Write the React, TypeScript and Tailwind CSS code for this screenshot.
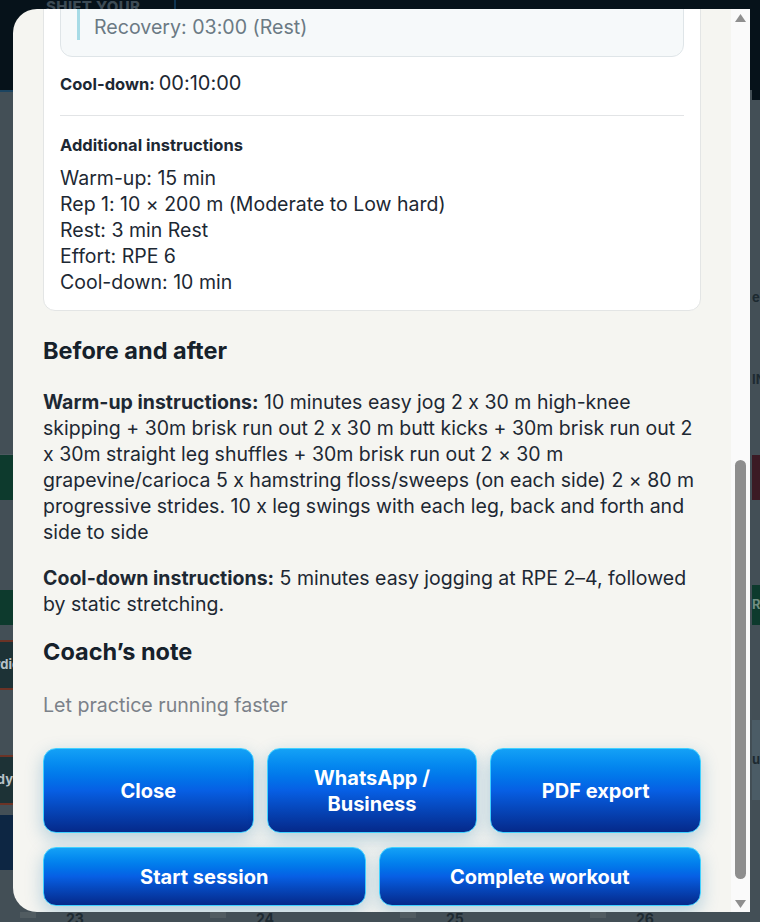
import { useLayoutEffect, useRef, useState, type ReactNode } from 'react';

const additional = [
  'Warm-up: 15 min',
  'Rep 1: 10 × 200 m (Moderate to Low hard)',
  'Rest: 3 min Rest',
  'Effort: RPE 6',
  'Cool-down: 10 min',
];

const goals = [
  'Run every rep within two seconds of the target time',
  'Stay relaxed through the shoulders and arms',
  'Keep a quick, light cadence on the bends',
  'Walk or stand still for the full recovery',
];

function ActionButton({ children, className = '' }: { children: ReactNode; className?: string }) {
  return (
    <button
      className={`flex items-center justify-center rounded-[13px] border border-[#3fd0ff] bg-linear-to-b from-[#14a1f6] via-[#075fe4] to-[#05298a] px-5 text-center text-[20px] font-bold leading-[26px] text-white shadow-[0_6px_18px_rgba(3,105,161,0.28)] ${className}`}
    >
      {children}
    </button>
  );
}

function StatTile({ label, value }: { label: string; value: string }) {
  return (
    <div className="rounded-xl border border-[#e3e5e5] bg-white px-4 py-3">
      <p className="text-[13px] font-semibold uppercase tracking-wide text-[#6b7a84]">{label}</p>
      <p className="mt-1 text-[20px] font-bold text-[#1b2631]">{value}</p>
    </div>
  );
}

function Arrow({ down = false }: { down?: boolean }) {
  return (
    <div className="flex h-[17px] items-center justify-center">
      <svg width="11" height="8" viewBox="0 0 11 8">
        <polygon points={down ? '0,0 11,0 5.5,8' : '0,8 11,8 5.5,0'} fill="#8f8f8f" />
      </svg>
    </div>
  );
}

// dimmed calendar behind the dialog
function Backdrop() {
  return (
    <div className="flex h-full flex-col">
      <div className="flex h-[90px] items-start bg-[#06121a] pl-[46px]">
        <span className="-mt-[4px] text-[15px] font-extrabold uppercase tracking-wide text-[#3d4b55]">Shift your</span>
        <span className="ml-[34px] h-[9px] w-[2px] bg-[#0f3552]" />
      </div>
      <div className="flex flex-1 justify-between">
        <div className="flex w-[60px] flex-col text-[13px] font-bold text-[#b7c2c8]">
          <div className="h-[2px] bg-[#1b4460]" />
          <div className="h-[363px] border-b border-[#4c585f]" />
          <div className="h-[45px] bg-[#0d3a2d]" />
          <div className="h-[90px]" />
          <div className="h-[35px] bg-[#0d3a2d]" />
          <div className="h-[15px]" />
          <div className="flex h-[50px] items-center justify-end whitespace-nowrap border-y-2 border-[#6b3326] bg-[#1d3236] pr-[40px]">Cardio</div>
          <div className="h-[65px]" />
          <div className="flex h-[50px] items-center justify-end whitespace-nowrap border-y-2 border-[#6b3326] bg-[#1d3236] pr-[47px]">Body</div>
          <div className="h-[10px]" />
          <div className="h-[55px] bg-[#0d2643]" />
          <div className="flex-1" />
        </div>
        <div className="flex w-[60px] flex-col pl-[52px] text-[13px] font-bold text-[#1d2a31]">
          <div className="h-[10px] bg-[#06121a]" />
          <div className="h-[188px]" />
          <div className="h-[20px] whitespace-nowrap">eed</div>
          <div className="h-[62px]" />
          <div className="h-[20px] whitespace-nowrap">IN</div>
          <div className="h-[65px]" />
          <div className="h-[45px] bg-[#3b1a24]" />
          <div className="h-[85px]" />
          <div className="flex h-[40px] items-center whitespace-nowrap bg-[#0d3a2d] text-[#6f8d82]">R</div>
          <div className="h-[95px]" />
          <div className="flex h-[80px] items-center whitespace-nowrap bg-[#4b5c66]">ur</div>
          <div className="flex-1" />
        </div>
      </div>
      <div className="grid h-[14px] grid-cols-4 text-[14px] font-bold leading-none text-[#1d2a31]">
        {['23', '24', '25', '26'].map((d) => (
          <div key={d} className="flex items-start gap-[30px] pl-[20px] pt-[4px]">
            <span className="h-[6px] w-[16px] bg-[#515c61]" />
            <span>{d}</span>
          </div>
        ))}
      </div>
    </div>
  );
}

export default function App() {
  const scrollRef = useRef<HTMLDivElement>(null);
  const trackRef = useRef<HTMLDivElement>(null);
  const [thumb, setThumb] = useState({ top: 0, height: 0 });

  const syncThumb = () => {
    const el = scrollRef.current;
    const track = trackRef.current;
    if (!el || !track) return;
    const h = track.clientHeight;
    setThumb({
      top: (el.scrollTop / el.scrollHeight) * h,
      height: (el.clientHeight / el.scrollHeight) * h,
    });
  };

  useLayoutEffect(() => {
    const el = scrollRef.current;
    if (!el) return;
    el.scrollTop = el.scrollHeight - el.clientHeight - 35;
    syncThumb();
  }, []);

  return (
    <div className="relative h-[922px] w-[760px] overflow-hidden bg-[#434f56] font-['Inter','Noto_Sans',sans-serif] [font-feature-settings:'calt'_0]">
      <Backdrop />

      <div className="absolute left-[13px] top-[9px] flex h-[903px] w-[737px] overflow-hidden rounded-l-[24px] bg-[#f5f5f1] text-[#1d2833]">
        <div
          ref={scrollRef}
          onScroll={syncThumb}
          className="min-w-0 flex-1 overflow-y-auto [scrollbar-width:none]"
        >
          <div className="px-[30px] pb-[41px] pt-[30px]">
            {/* header */}
            <p className="text-[13px] font-semibold uppercase tracking-wide text-[#0e7490]">Tuesday · Week 3</p>
            <h2 className="mt-2 text-[26px] font-bold leading-[34px] text-[#16212b]">Speed intervals — 10 × 200 m</h2>
            <p className="mt-1 text-[16px] text-[#6b7a84]">Track session · 55 min · RPE 6</p>
            <p className="mt-2 text-[16px] leading-[26px] text-[#6b7a84]">Surface: Track · Shoes: Racing flats</p>

            <div className="mt-6 grid grid-cols-3 gap-3">
              <StatTile label="Duration" value="00:55:00" />
              <StatTile label="Distance" value="4.2 km" />
              <StatTile label="Effort" value="RPE 6" />
            </div>

            <h3 className="mt-[26px] text-[23.5px] font-bold leading-[30px] text-[#16212b]">Description</h3>
            <p className="mt-3 text-[19.5px] leading-[26px]">
              Short repeats at a controlled, moderate pace. Focus on relaxed shoulders, quick turnover and a
              tall posture. Keep every rep at the same speed and take the full recovery between them. If the
              last reps slow down by more than two seconds, stop the set early and jog the cool-down instead.
            </p>

            <h3 className="mt-[26px] text-[23.5px] font-bold leading-[30px] text-[#16212b]">Session goals</h3>
            <ul className="mt-3 text-[19.5px] leading-[26px]">
              {goals.map((g) => (
                <li key={g}>• {g}</li>
              ))}
            </ul>

            <h3 className="mt-[26px] text-[23.5px] font-bold leading-[30px] text-[#16212b]">Workout structure</h3>

            <div className="mt-[20px] rounded-xl border border-[#e3e5e5] bg-white px-4 pb-[15px] pt-4">
              <p className="text-[16.5px] font-bold leading-[28px]">
                Warm-up: <span className="text-[20px] font-normal">00:15:00</span>
              </p>
              <p className="mt-3 text-[16.5px] font-bold leading-[22px]">Main set</p>
              <div className="mt-3 rounded-xl border border-[#dfe5e8] bg-[#f6f9fa] p-4">
                <div className="border-l-[3px] border-[#a7dbe6] pl-[14px] text-[19.6px] leading-[26px] text-[#6b7a84]">
                  <p className="font-semibold text-[#1d2833]">Rep 1: 10 × 200 m</p>
                  <p>Distance: 200 m</p>
                  <p>Target: 00:40 per rep</p>
                  <p>Pace: Moderate to Low hard</p>
                  <p>Effort: RPE 6</p>
                  <p>Recovery: 03:00 (Rest)</p>
                </div>
              </div>

              <p className="mt-[11px] text-[16.5px] font-bold leading-[30px]">
                Cool-down: <span className="text-[20px] font-normal">00:10:00</span>
              </p>

              <div className="mt-[16px] border-t border-[#e2e4e6] pt-[18px]">
                <p className="text-[16.5px] font-bold leading-[22px]">Additional instructions</p>
                <div className="mt-[9px] text-[19.5px] leading-[26px]">
                  {additional.map((line) => (
                    <p key={line}>{line}</p>
                  ))}
                </div>
              </div>
            </div>

            {/* before / after */}
            <h3 className="mt-[25px] text-[23.5px] font-bold leading-[30px] text-[#16212b]">Before and after</h3>
            <p className="mt-[23px] text-[19.5px] leading-[26px]">
              <span className="font-bold">Warm-up instructions:</span> 10 minutes easy jog 2 x 30 m high-knee
              skipping + 30m brisk run out 2 x 30 m butt kicks + 30m brisk run out 2 x 30m straight leg shuffles
              + 30m brisk run out 2 × 30 m grapevine/carioca 5 x hamstring floss/sweeps (on each side) 2 × 80 m
              progressive strides. 10 x leg swings with each leg, back and forth and side to side
            </p>
            <p className="mt-[20px] text-[19.5px] leading-[26px]">
              <span className="font-bold">Cool-down instructions:</span> 5 minutes easy jogging at RPE 2–4,
              followed by static stretching.
            </p>

            <h3 className="mt-[20px] text-[23.5px] font-bold leading-[30px] text-[#16212b]">Coach’s note</h3>
            <p className="mt-[25px] text-[19.6px] leading-[26px] text-[#7b8189]">Let practice running faster</p>

            {/* actions */}
            <div className="mt-[30px] grid grid-cols-3 gap-[13px]">
              <ActionButton className="h-[85px]">Close</ActionButton>
              <ActionButton className="h-[85px]">WhatsApp / Business</ActionButton>
              <ActionButton className="h-[85px]">PDF export</ActionButton>
            </div>
            <div className="mt-[14px] grid grid-cols-2 gap-[13px]">
              <ActionButton className="h-[59px]">Start session</ActionButton>
              <ActionButton className="h-[59px]">Complete workout</ActionButton>
            </div>
          </div>
        </div>

        {/* scrollbar */}
        <div className="flex w-[19px] shrink-0 flex-col bg-[#fafafa]">
          <Arrow />
          <div ref={trackRef} className="flex-1">
            <div
              className="mx-auto w-[11px] rounded-full bg-[#8e8e8e]"
              style={{ marginTop: thumb.top, height: thumb.height }}
            />
          </div>
          <Arrow down />
        </div>
      </div>
    </div>
  );
}
